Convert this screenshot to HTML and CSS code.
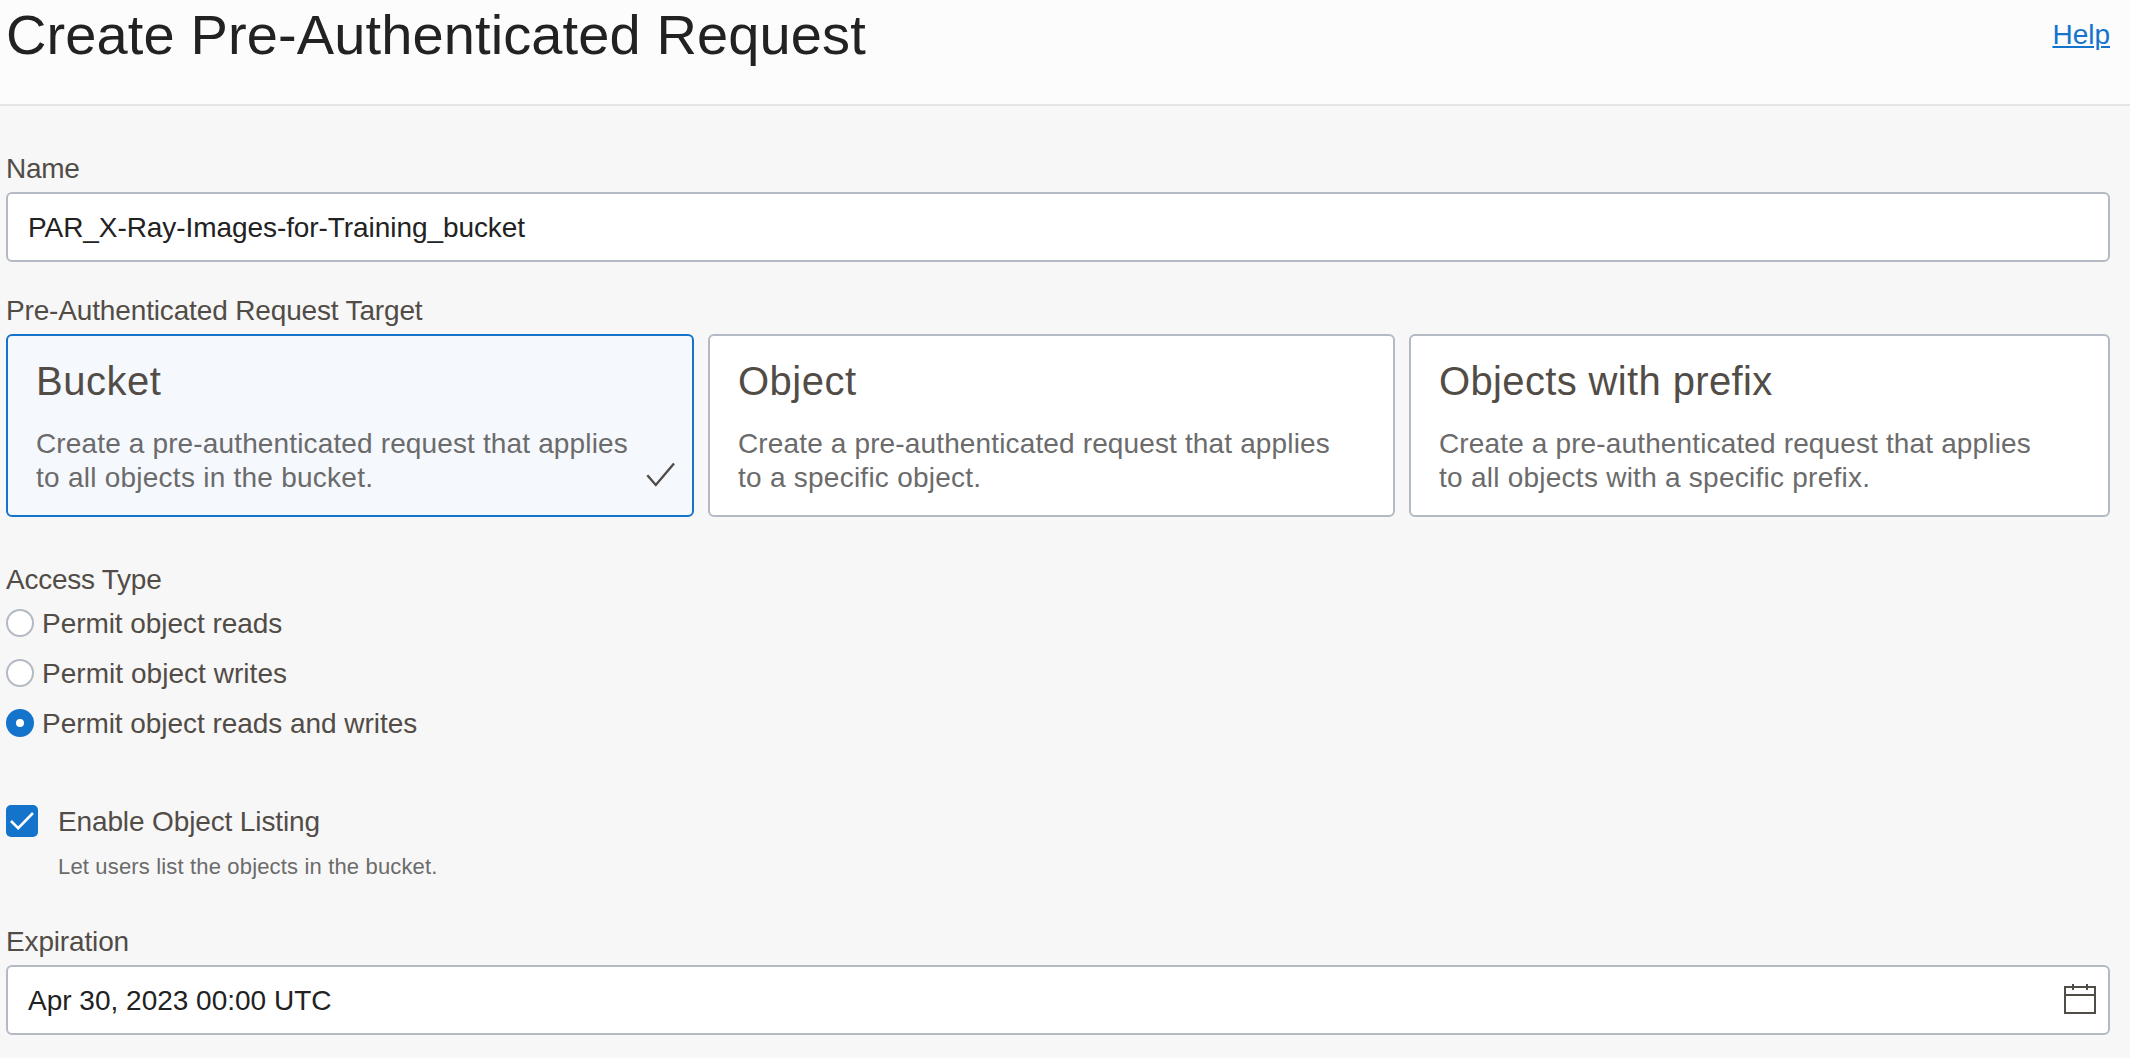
FILE: index.html
```html
<!DOCTYPE html>
<html lang="en">
<head>
<meta charset="utf-8">
<title>Create Pre-Authenticated Request</title>
<link rel="stylesheet" href="styles.css">
</head>
<body>
<header class="header">
  <h1 class="title">Create Pre-Authenticated Request</h1>
  <a class="help" href="#">Help</a>
</header>
<main class="form">
  <section class="field">
    <div class="label label-name">Name</div>
    <div class="input"><span class="value-name">PAR_X-Ray-Images-for-Training_bucket</span></div>
  </section>
  <section class="field">
    <div class="label">Pre-Authenticated Request Target</div>
    <div class="cards">
      <article class="card selected">
        <h2 class="card-title">Bucket</h2>
        <p class="card-text">Create a pre-authenticated request that applies<br><span class="second-line">to all objects in the bucket.</span></p>
        <svg class="card-check" viewBox="0 0 30 26"><path d="M2.3 13.3 10.8 23 29 1.5"/></svg>
      </article>
      <article class="card">
        <h2 class="card-title">Object</h2>
        <p class="card-text">Create a pre-authenticated request that applies<br><span class="second-line">to a specific object.</span></p>
      </article>
      <article class="card">
        <h2 class="card-title card-title-long">Objects with prefix</h2>
        <p class="card-text">Create a pre-authenticated request that applies<br><span class="second-line">to all objects with a specific prefix.</span></p>
      </article>
    </div>
  </section>
  <section class="access">
    <div class="label label-access">Access Type</div>
    <div class="radio"><span class="dot"></span><span class="radio-text">Permit object reads</span></div>
    <div class="radio"><span class="dot"></span><span class="radio-text radio-text-wide">Permit object writes</span></div>
    <div class="radio"><span class="dot on"></span><span class="radio-text">Permit object reads and writes</span></div>
  </section>
  <section class="listing">
    <svg class="checkbox" viewBox="0 0 32 32"><rect width="32" height="32" rx="5"/><path d="M5 16 12.2 23.2 27 8"/></svg>
    <div>
      <div class="listing-label">Enable Object Listing</div>
      <div class="hint">Let users list the objects in the bucket.</div>
    </div>
  </section>
  <section class="field">
    <div class="label">Expiration</div>
    <div class="input">
      <span>Apr 30, 2023 00:00 UTC</span>
      <svg class="calendar" viewBox="0 0 32 30"><path d="M1 3H31V29H1ZM1 11H31M9 0V6M23 0V6"/></svg>
    </div>
  </section>
</main>
</body>
</html>
```
FILE: styles.css
```css
* {
  box-sizing: border-box;
}

body {
  margin: 0;
  min-height: 1058px;
  background: #f7f7f7;
  color: #524c47;
  font: 28px/34px "Liberation Sans", Arial, sans-serif;
}

h1, h2, p {
  margin: 0;
  font-weight: 400;
}

.header {
  display: flex;
  justify-content: space-between;
  align-items: flex-start;
  height: 106px;
  padding: 3px 20px 0 6px;
  border-bottom: 2px solid #e5e5e5;
  background: #fcfcfc;
}

.title {
  color: #222;
  font-size: 56px;
  line-height: 64px;
  letter-spacing: 0.12px;
}

.help {
  margin-top: 15px;
  color: #1474cc;
  text-decoration-thickness: 2px;
  text-underline-offset: 2px;
}

.form {
  display: flex;
  flex-direction: column;
  padding: 46px 20px 0 6px;
}

.field {
  margin-bottom: 32px;
}

.label {
  margin-bottom: 6px;
  letter-spacing: -0.15px;
}

.label-name {
  letter-spacing: -0.3px;
}

.label-access {
  letter-spacing: -0.25px;
}

.input {
  display: flex;
  align-items: center;
  justify-content: space-between;
  height: 70px;
  padding: 2px 12px 0 20px;
  border: 2px solid #b3bac3;
  border-radius: 6px;
  background: #fff;
  color: #222;
}

.value-name {
  letter-spacing: -0.07px;
}

.calendar {
  width: 32px;
  height: 30px;
  margin-bottom: 4px;
  fill: none;
  stroke: #524c47;
  stroke-width: 2;
}

.cards {
  display: grid;
  grid-template-columns: 702px 701px 1fr;
}

.card {
  position: relative;
  height: 183px;
  margin-right: 14px;
  padding: 21px 28px 0;
  border: 2px solid #b3bac3;
  border-radius: 6px;
  background: #fff;
}

.card:last-child {
  margin-right: 0;
}

.card.selected {
  border-color: #1474cc;
  background: #f5f8fd;
}

.card-title {
  margin-bottom: 22px;
  font-size: 40px;
  line-height: 48px;
  letter-spacing: 0.5px;
}

.card-title-long {
  letter-spacing: 0.36px;
}

.card-text {
  color: #6b6b6b;
  letter-spacing: 0.14px;
  white-space: nowrap;
}

.second-line {
  letter-spacing: 0.25px;
}

.card-check {
  position: absolute;
  right: 17px;
  bottom: 27px;
  width: 30px;
  height: 26px;
  fill: none;
  stroke: #524c47;
  stroke-width: 2.4;
}

.access {
  margin-top: 14px;
}

.access .label {
  margin-bottom: 12px;
}

.radio {
  display: flex;
  align-items: center;
  gap: 8px;
  height: 28px;
  margin-bottom: 22px;
}

.radio-text {
  padding-top: 2px;
  letter-spacing: -0.05px;
}

.radio-text-wide {
  letter-spacing: 0.04px;
}

.dot {
  width: 28px;
  height: 28px;
  border: 2px solid #b3bac3;
  border-radius: 50%;
  background: #fff;
}

.dot.on {
  border: 10px solid #1474cc;
}

.listing {
  display: flex;
  gap: 20px;
  height: 120px;
  margin-top: 46px;
}

.checkbox {
  width: 32px;
  height: 32px;
  fill: #1474cc;
}

.checkbox path {
  fill: none;
  stroke: #fff;
  stroke-width: 2.6;
}

.listing-label {
  letter-spacing: -0.13px;
}

.hint {
  margin-top: 14px;
  color: #6b6b6b;
  font-size: 22px;
  line-height: 28px;
  letter-spacing: 0.16px;
}
```
